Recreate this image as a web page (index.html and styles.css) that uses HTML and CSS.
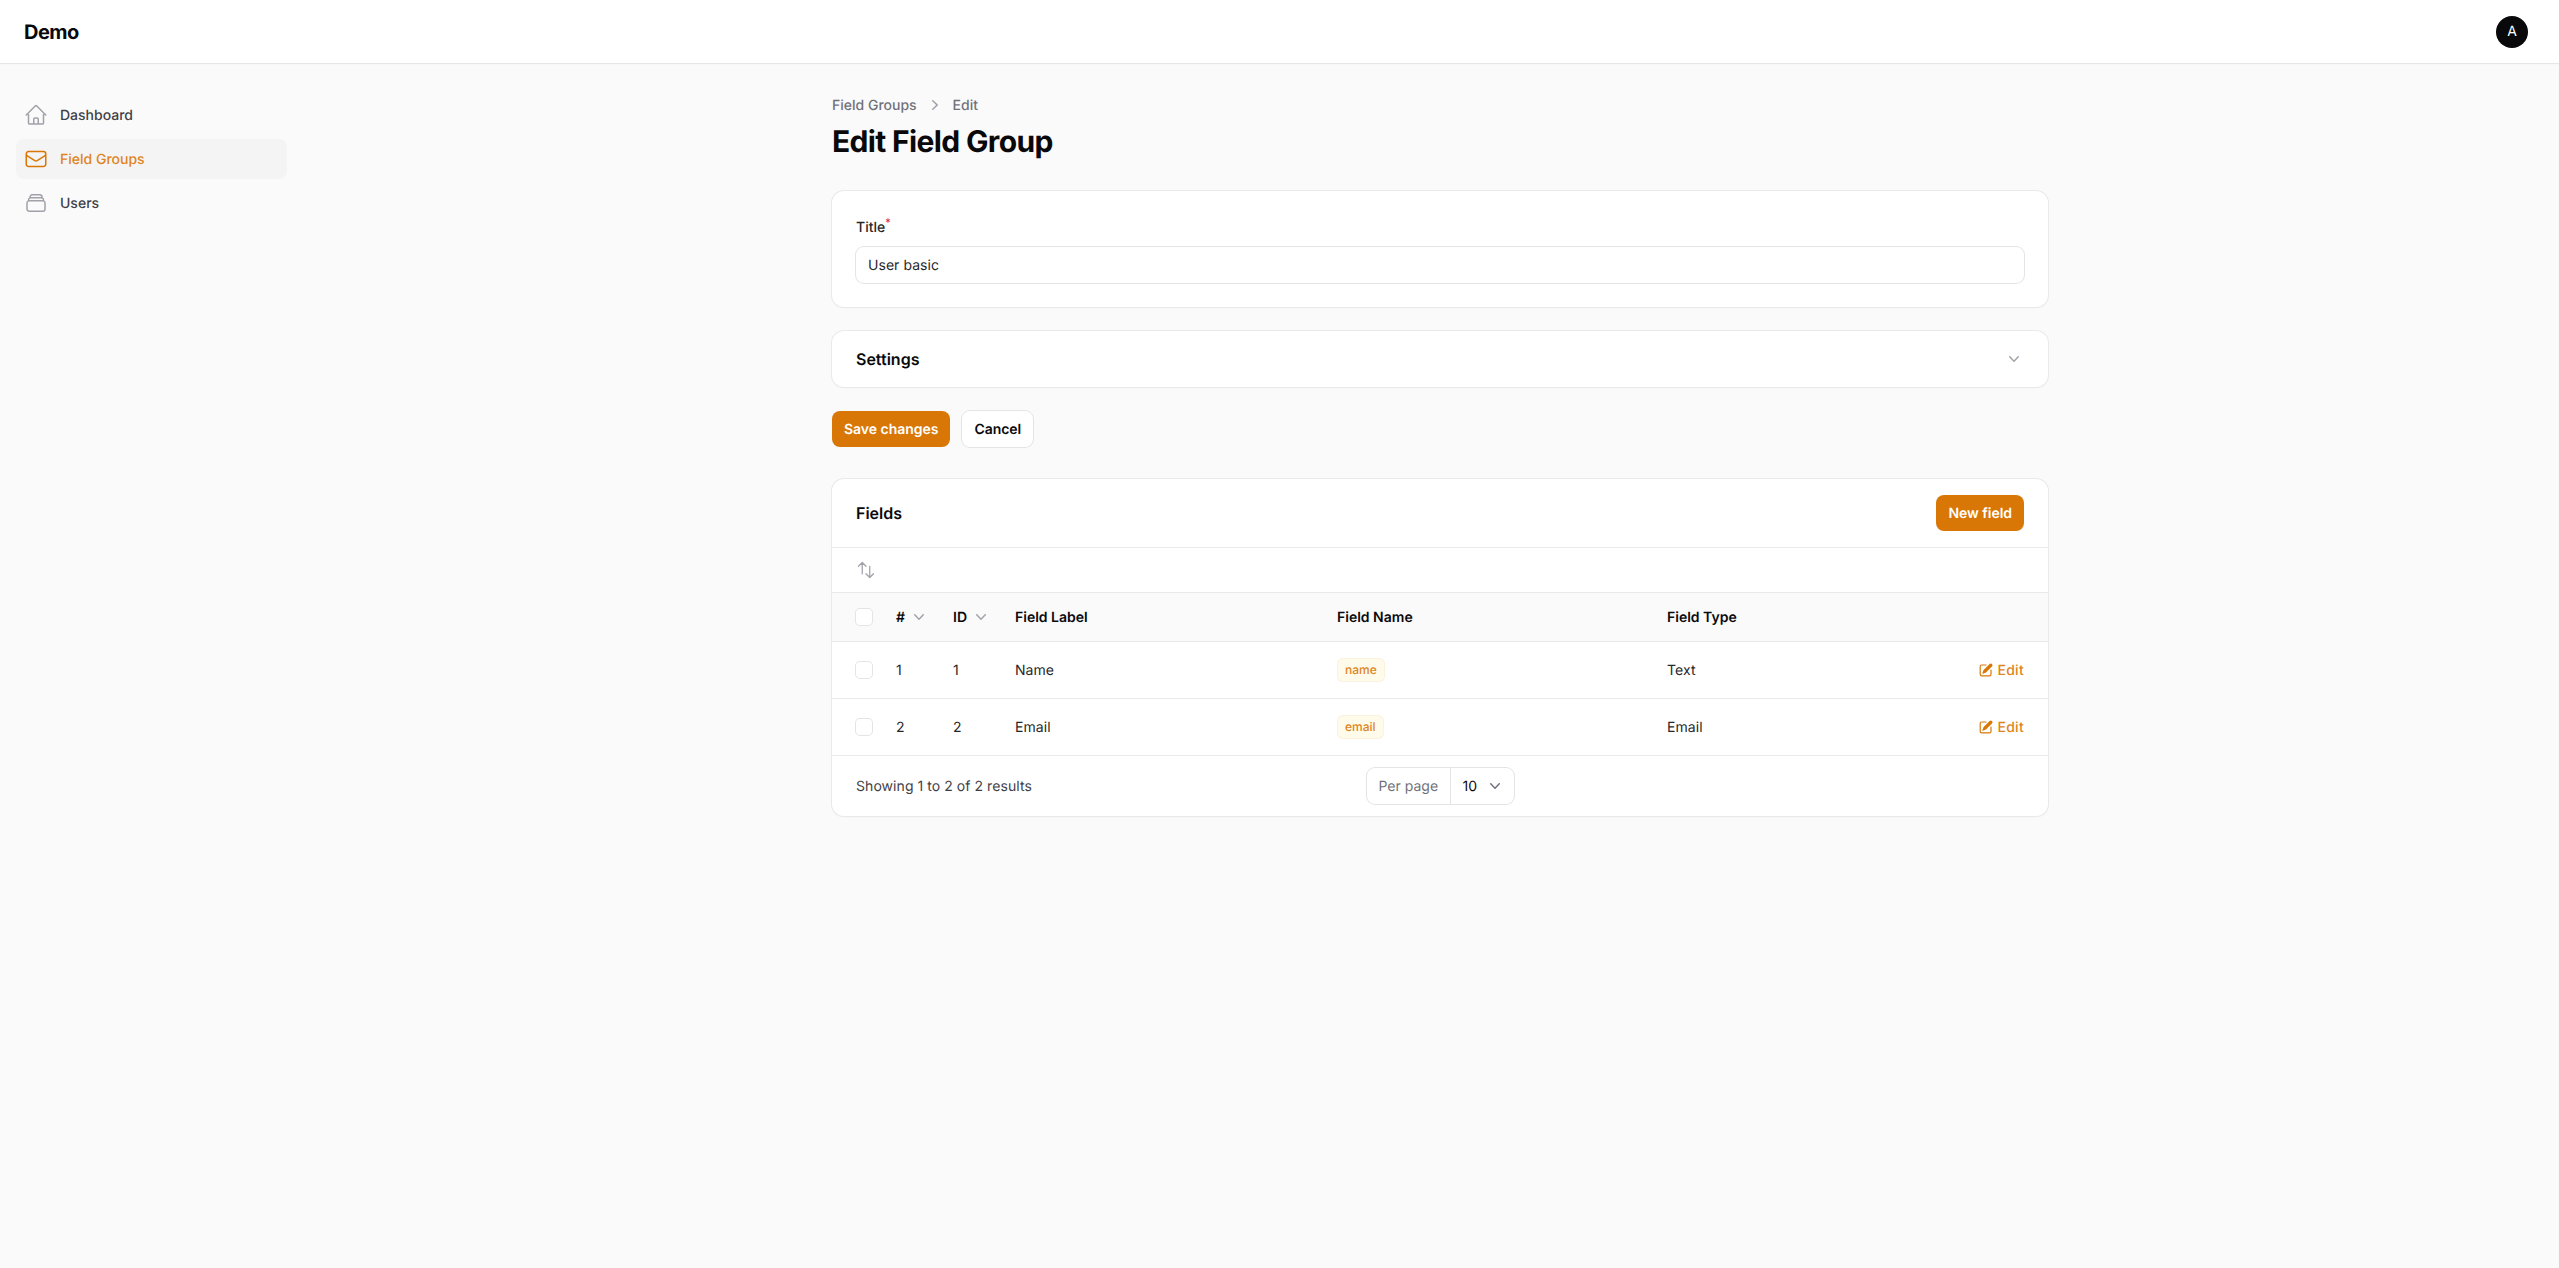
FILE: index.html
```html
<!DOCTYPE html>
<html lang="en">
<head>
<meta charset="utf-8">
<title>Edit Field Group - Demo</title>
<link rel="stylesheet" href="styles.css">
</head>
<body>
<header class="topbar">
  <div class="brand">Demo</div>
  <div class="avatar">A</div>
</header>
<div class="layout">
  <aside class="sidebar">
    <nav class="nav">
      <a class="nav-item">
        <svg class="nav-icon" viewBox="0 0 24 24"><path d="M2.25 12l8.954-8.955c.44-.439 1.152-.439 1.591 0L21.75 12M4.5 9.75v10.125c0 .621.504 1.125 1.125 1.125H9.75v-4.875c0-.621.504-1.125 1.125-1.125h2.25c.621 0 1.125.504 1.125 1.125V21h4.125c.621 0 1.125-.504 1.125-1.125V9.75M8.25 21h8.25"/></svg>
        <span class="txt">Dashboard</span>
      </a>
      <a class="nav-item is-active">
        <svg class="nav-icon" viewBox="0 0 24 24"><path d="M21.75 6.75v10.5a2.25 2.25 0 01-2.25 2.25h-15a2.25 2.25 0 01-2.25-2.25V6.75m19.5 0A2.25 2.25 0 0019.5 4.5h-15a2.25 2.25 0 00-2.25 2.25m19.5 0v.243a2.25 2.25 0 01-1.07 1.916l-7.5 4.615a2.25 2.25 0 01-2.36 0L3.32 8.91a2.25 2.25 0 01-1.07-1.916V6.75"/></svg>
        <span class="txt">Field Groups</span>
      </a>
      <a class="nav-item">
        <svg class="nav-icon" viewBox="0 0 24 24"><path d="M6 6.878V6a2.25 2.25 0 012.25-2.25h7.5A2.25 2.25 0 0118 6v.878m-12 0c.235-.083.487-.128.75-.128h10.5c.263 0 .515.045.75.128m-12 0A2.25 2.25 0 004.5 9v.878m13.5-3A2.25 2.25 0 0119.5 9v.878m0 0a2.246 2.246 0 00-.75-.128H5.25c-.263 0-.515.045-.75.128m15 0A2.25 2.25 0 0121 12v6a2.25 2.25 0 01-2.25 2.25H5.25A2.25 2.25 0 013 18v-6c0-.98.626-1.813 1.5-2.122"/></svg>
        <span class="txt">Users</span>
      </a>
    </nav>
  </aside>
  <main class="main">
    <div class="breadcrumbs">
      <span class="txt">Field Groups</span>
      <svg class="icon-20 crumb-sep" viewBox="0 0 20 20"><path d="M7.21 14.77a.75.75 0 01.02-1.06L11.168 10 7.23 6.29a.75.75 0 111.04-1.08l4.5 4.25a.75.75 0 010 1.08l-4.5 4.25a.75.75 0 01-1.06-.02z"/></svg>
      <span class="txt">Edit</span>
    </div>
    <h1 class="page-title">Edit Field Group</h1>

    <section class="card form-card">
      <div class="field-label">Title<sup class="required">*</sup></div>
      <div class="text-input">User basic</div>
    </section>

    <section class="card settings-card">
      <h2 class="card-heading">Settings</h2>
      <svg class="icon-20 muted-icon" viewBox="0 0 20 20"><path d="M5.23 7.21a.75.75 0 011.06.02L10 11.168l3.71-3.938a.75.75 0 111.08 1.04l-4.25 4.5a.75.75 0 01-1.08 0l-4.25-4.5a.75.75 0 01.02-1.06z"/></svg>
    </section>

    <div class="actions">
      <button class="btn btn-primary">Save changes</button>
      <button class="btn btn-plain">Cancel</button>
    </div>

    <section class="card table-card">
      <div class="table-header">
        <h2 class="card-heading">Fields</h2>
        <button class="btn btn-primary">New field</button>
      </div>
      <div class="table-toolbar">
        <svg class="icon-20 stroke-icon" viewBox="0 0 24 24"><path d="M3 7.5L7.5 3m0 0L12 7.5M7.5 3v13.5m13.5 0L16.5 21m0 0L12 16.5m4.5 4.5V7.5"/></svg>
      </div>
      <table class="table">
        <colgroup>
          <col class="col-check"><col class="col-num"><col class="col-id"><col class="col-label"><col class="col-name"><col class="col-type"><col>
        </colgroup>
        <thead>
          <tr>
            <th class="cell-check"><input class="checkbox" type="checkbox"></th>
            <th class="cell-flush"><span class="sortable"><span class="txt">#</span><svg class="icon-20 muted-icon" viewBox="0 0 20 20"><path d="M5.23 7.21a.75.75 0 011.06.02L10 11.168l3.71-3.938a.75.75 0 111.08 1.04l-4.25 4.5a.75.75 0 01-1.08 0l-4.25-4.5a.75.75 0 01.02-1.06z"/></svg></span></th>
            <th class="cell-flush"><span class="sortable"><span class="txt">ID</span><svg class="icon-20 muted-icon" viewBox="0 0 20 20"><path d="M5.23 7.21a.75.75 0 011.06.02L10 11.168l3.71-3.938a.75.75 0 111.08 1.04l-4.25 4.5a.75.75 0 01-1.08 0l-4.25-4.5a.75.75 0 01.02-1.06z"/></svg></span></th>
            <th>Field Label</th>
            <th>Field Name</th>
            <th>Field Type</th>
            <th></th>
          </tr>
        </thead>
        <tbody>
          <tr>
            <td class="cell-check"><input class="checkbox" type="checkbox"></td>
            <td>1</td>
            <td>1</td>
            <td>Name</td>
            <td class="cell-flush"><span class="badge">name</span></td>
            <td>Text</td>
            <td class="cell-action"><a class="edit-link"><svg class="icon-16" viewBox="0 0 20 20"><path d="M5.433 13.917l1.262-3.155A4 4 0 017.58 9.42l6.92-6.918a2.121 2.121 0 013 3l-6.92 6.918c-.383.383-.84.685-1.343.886l-3.154 1.262a.5.5 0 01-.65-.65z"/><path d="M3.5 5.75c0-.69.56-1.25 1.25-1.25H10A.75.75 0 0010 3H4.75A2.75 2.75 0 002 5.75v9.5A2.75 2.75 0 004.75 18h9.5A2.75 2.75 0 0017 15.25V10a.75.75 0 00-1.5 0v5.25c0 .69-.56 1.25-1.25 1.25h-9.5c-.69 0-1.25-.56-1.25-1.25v-9.5z"/></svg><span class="txt">Edit</span></a></td>
          </tr>
          <tr>
            <td class="cell-check"><input class="checkbox" type="checkbox"></td>
            <td>2</td>
            <td>2</td>
            <td>Email</td>
            <td class="cell-flush"><span class="badge">email</span></td>
            <td>Email</td>
            <td class="cell-action"><a class="edit-link"><svg class="icon-16" viewBox="0 0 20 20"><path d="M5.433 13.917l1.262-3.155A4 4 0 017.58 9.42l6.92-6.918a2.121 2.121 0 013 3l-6.92 6.918c-.383.383-.84.685-1.343.886l-3.154 1.262a.5.5 0 01-.65-.65z"/><path d="M3.5 5.75c0-.69.56-1.25 1.25-1.25H10A.75.75 0 0010 3H4.75A2.75 2.75 0 002 5.75v9.5A2.75 2.75 0 004.75 18h9.5A2.75 2.75 0 0017 15.25V10a.75.75 0 00-1.5 0v5.25c0 .69-.56 1.25-1.25 1.25h-9.5c-.69 0-1.25-.56-1.25-1.25v-9.5z"/></svg><span class="txt">Edit</span></a></td>
          </tr>
        </tbody>
      </table>
      <div class="table-footer">
        <div class="results txt">Showing 1 to 2 of 2 results</div>
        <div class="per-page">
          <span class="per-page-label">Per page</span>
          <span class="per-page-value"><span class="txt">10</span><svg class="icon-20 select-chevron" viewBox="0 0 20 20"><path d="M5.23 7.21a.75.75 0 011.06.02L10 11.168l3.71-3.938a.75.75 0 111.08 1.04l-4.25 4.5a.75.75 0 01-1.08 0l-4.25-4.5a.75.75 0 01.02-1.06z"/></svg></span>
        </div>
        <div></div>
      </div>
    </section>
  </main>
</div>
</body>
</html>
```

FILE: styles.css
```css
* { box-sizing: border-box; }

html, body { margin: 0; min-height: 100%; }

body {
  background: #fafafa;
  color: #09090b;
  font-family: Inter, "Liberation Sans", sans-serif;
  font-size: 14px;
  line-height: 20px;
  min-height: 1268px;
  text-rendering: geometricPrecision;
}

/* Nudges 14px labels one pixel down inside centred flex rows. */
.txt { padding-top: 2px; }

.topbar {
  height: 63px;
  background: #fff;
  box-shadow: 0 1px 0 #e6e6e7, 0 2px 2px rgba(0, 0, 0, .02);
  display: flex;
  align-items: center;
  justify-content: space-between;
  padding: 0 31px 0 24px;
  position: relative;
}

.brand {
  font-size: 20px;
  line-height: 20px;
  font-weight: 700;
  letter-spacing: -.5px;
}

.avatar {
  width: 32px;
  height: 32px;
  border-radius: 50%;
  background: #09090b;
  color: #fff;
  font-size: 14px;
  display: flex;
  align-items: center;
  justify-content: center;
}

.layout { display: flex; }

.sidebar {
  width: 320px;
  flex: none;
  padding: 32px 33px 0 16px;
}

.nav { display: flex; flex-direction: column; gap: 4px; }

.nav-item {
  height: 40px;
  display: flex;
  align-items: center;
  gap: 12px;
  padding: 0 8px;
  border-radius: 8px;
  color: #3f3f46;
  font-weight: 500;
}

.nav-icon {
  width: 24px;
  height: 24px;
  fill: none;
  stroke: #a1a1aa;
  stroke-width: 1.5;
  stroke-linecap: round;
  stroke-linejoin: round;
}

.nav-item.is-active { background: #f4f4f5; color: #de8420; }
.nav-item.is-active .nav-icon { stroke: #d97706; }

.main {
  flex: 1;
  min-width: 0;
  max-width: 1280px;
  margin: 0 auto;
  padding: 32px 31.5px 0 32.5px;
}

.breadcrumbs {
  display: flex;
  align-items: center;
  gap: 8px;
  height: 20px;
  color: #71717a;
  font-weight: 500;
}

.icon-20 { width: 20px; height: 20px; flex: none; display: block; }
.icon-16 { width: 16px; height: 16px; flex: none; display: block; fill: #d97706; }
.crumb-sep, .muted-icon { fill: #a1a1aa; }

.stroke-icon {
  fill: none;
  stroke: #a1a1aa;
  stroke-width: 1.5;
  stroke-linecap: round;
  stroke-linejoin: round;
}

.page-title {
  margin: 9px 0 31px;
  font-size: 30px;
  line-height: 36px;
  font-weight: 700;
  letter-spacing: -.65px;
}

.card {
  background: #fff;
  border-radius: 12px;
  box-shadow: 0 0 0 1px #e9e9ea, 0 1px 2px rgba(0, 0, 0, .05);
}

.form-card { padding: 24px; margin-bottom: 24px; }

.field-label {
  height: 24px;
  padding-top: 1px;
  font-weight: 500;
  line-height: 24px;
  color: #27272a;
}

.required {
  color: #dc2626;
  font-size: 10.5px;
  line-height: 0;
  vertical-align: super;
}

.text-input {
  margin-top: 8px;
  height: 36px;
  padding: 1px 12px 0;
  background: #fff;
  border-radius: 8px;
  box-shadow: 0 0 0 1px #e4e4e7;
  line-height: 36px;
  color: #27272a;
  letter-spacing: .05px;
}

.settings-card {
  height: 56px;
  padding: 0 24px;
  display: flex;
  align-items: center;
  justify-content: space-between;
  margin-bottom: 24px;
}

.card-heading {
  margin: 0;
  font-size: 16px;
  line-height: 24px;
  font-weight: 600;
}

.actions { display: flex; gap: 12px; margin-bottom: 32px; }

.btn {
  height: 36px;
  padding: 2px 12px 0;
  border: 0;
  border-radius: 8px;
  font: 600 14px/20px Inter, "Liberation Sans", sans-serif;
  letter-spacing: -.03px;
  text-rendering: geometricPrecision;
}

.btn-primary { background: #d97706; color: #fff; }
.btn-plain { background: #fff; color: #09090b; box-shadow: 0 0 0 1px #e4e4e7; }

.table-header {
  height: 69px;
  padding: 0 24px;
  display: flex;
  align-items: center;
  justify-content: space-between;
  border-bottom: 1px solid #e9e9ea;
}

.table-toolbar {
  height: 45px;
  padding: 0 24px;
  display: flex;
  align-items: center;
  border-bottom: 1px solid #e9e9ea;
}

.table {
  width: 100%;
  border-collapse: separate;
  border-spacing: 0;
  table-layout: fixed;
}

.col-check { width: 52px; }
.col-num { width: 57px; }
.col-id { width: 62px; }
.col-label { width: 322px; }
.col-name { width: 330px; }
.col-type { width: 200px; }

.table th, .table td {
  padding: 2px 12px 0;
  border-bottom: 1px solid #e9e9ea;
  text-align: left;
}

.table th {
  height: 49px;
  background: #fafafa;
  font-weight: 600;
}

.table td { height: 57px; color: #27272a; letter-spacing: .06px; }

.table .cell-check { padding: 0 12px 0 24px; }
.table .cell-flush { padding: 0 12px; }
.table .cell-action { padding: 0 24px 0 12px; }

.sortable { display: flex; align-items: center; gap: 4px; }

.checkbox {
  appearance: none;
  display: block;
  width: 16px;
  height: 16px;
  margin: 0;
  background: #fff;
  border-radius: 4px;
  box-shadow: 0 0 0 1px #e4e4e7;
}

.badge {
  display: inline-block;
  height: 24px;
  padding: 0 8px;
  background: #fffbeb;
  color: #de8420;
  border-radius: 6px;
  box-shadow: inset 0 0 0 1px #fcf1dd;
  font-size: 12px;
  font-weight: 500;
  letter-spacing: 0;
  line-height: 24px;
  vertical-align: middle;
}

.edit-link {
  display: flex;
  justify-content: flex-end;
  align-items: center;
  gap: 3px;
  color: #de8420;
  font-weight: 500;
  letter-spacing: .3px;
}

.table-footer {
  height: 60px;
  padding: 0 24px;
  display: grid;
  grid-template-columns: 1fr auto 1fr;
  align-items: center;
}

.results { color: #3f3f46; letter-spacing: .06px; }

.per-page {
  display: flex;
  height: 36px;
  border-radius: 8px;
  box-shadow: 0 0 0 1px #e4e4e7;
  line-height: 36px;
}

.per-page-label {
  padding: 1px 12px 0;
  width: 84px;
  color: #71717a;
  border-right: 1px solid #e4e4e7;
  white-space: nowrap;
}

.per-page-value {
  width: 63px;
  padding-left: 12px;
  display: flex;
  align-items: center;
  gap: 8px;
}

.select-chevron { fill: #71717a; }
```
